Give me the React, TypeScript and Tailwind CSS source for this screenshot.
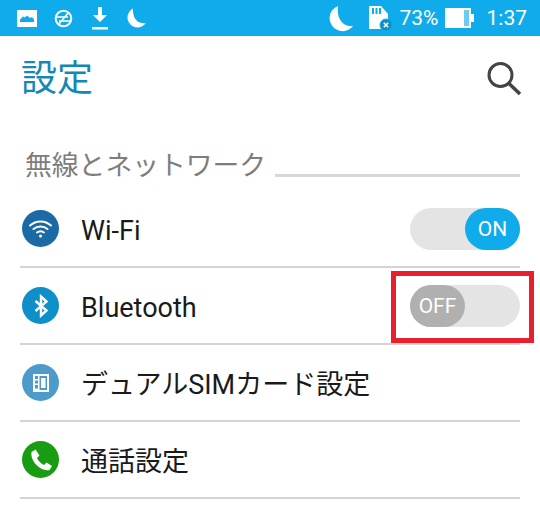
import type { ReactNode } from 'react';

const jp = "font-['Roboto','Noto_Sans_CJK_JP',sans-serif]";

function Toggle({ on }: { on: boolean }) {
  return (
    <div className={`relative flex h-[42px] w-[110px] rounded-full bg-[#e4e4e4] ${on ? 'justify-end' : 'justify-start'}`}>
      <div
        className={`flex h-[42px] w-[55px] items-center justify-center rounded-full text-[21px] text-white ${
          on ? 'bg-[#0fabeb]' : 'bg-[#b0b0b0]'
        }`}
      >
        <span className="pt-[2px]">{on ? 'ON' : 'OFF'}</span>
      </div>
    </div>
  );
}

function Row({ icon, color, label, right }: { icon: ReactNode; color: string; label: string; right?: ReactNode }) {
  return (
    <div className="flex h-[77px] items-center justify-between border-b-2 border-[#d4d4d4]">
      <div className="ml-[2px] flex items-center">
        <div className={`flex h-[37px] w-[37px] items-center justify-center rounded-full ${color}`}>{icon}</div>
        <span className="ml-[22px] pt-[5px] text-[27px] leading-none text-[#1a1a1a]">{label}</span>
      </div>
      {right}
    </div>
  );
}

export default function App() {
  return (
    <div className={`h-[505px] w-[540px] overflow-hidden bg-white ${jp}`}>
      {/* ステータスバー */}
      <div className="flex h-[36px] items-center justify-between bg-[#0fabeb] text-white">
        <div className="flex items-center">
          <svg className="ml-[17px]" width="20" height="17" viewBox="0 0 20 17">
            <path fill="#fff" d="M0 0h20v17H0z" />
            <path fill="#0fabeb" d="M3 12V9.500L6 6.500l2 1 2-2 3 2.500 2-1 2 2.500V12z" />
          </svg>
          <svg className="ml-[17px]" width="19" height="19" viewBox="0 0 19 19">
            <circle cx="9.500" cy="9.500" r="7.800" fill="none" stroke="#fff" strokeWidth="2" />
            <path stroke="#fff" strokeWidth="1.600" d="M3 8h11M5 12h11M14.500 3.500l-10 12" fill="none" />
          </svg>
          <svg className="ml-[18px]" width="18" height="24" viewBox="0 0 18 24">
            <path fill="#fff" d="M7 1h4v8h5l-7 7-7-7h5zM1 21h16v2.500H1z" />
          </svg>
          <svg className="ml-[16px]" width="21" height="21" viewBox="0 0 21 21">
            <path fill="#fff" d="M8 .5a10 10 0 1 0 12.800 14.500C15 16 7.500 13 8 .5z" />
          </svg>
        </div>
        <div className="flex items-center">
          <svg width="27" height="27" viewBox="0 0 27 27">
            <path fill="#fff" d="M11 1a13 13 0 1 0 15 20C19 22 9 17 11 1z" />
          </svg>
          <svg className="ml-[14px]" width="24" height="26" viewBox="0 0 24 26">
            <path fill="#fff" d="M1 1h12l7 8v15H1z" />
            <path fill="#0fabeb" d="M4 3h2v6H4zM7.500 3h2v6h-2zM11 3h2v6h-2z" />
            <circle cx="18" cy="20" r="6" fill="#0d8ec4" stroke="#0fabeb" strokeWidth="1" />
            <path stroke="#fff" strokeWidth="1.600" d="M15.800 17.800l4.400 4.400M20.200 17.800l-4.400 4.400" />
          </svg>
          <span className="ml-[8px] text-[21px] leading-none">73%</span>
          <svg className="ml-[6px]" width="30" height="20" viewBox="0 0 30 20">
            <path fill="#fff" d="M0 0h26v20H0z" />
            <path fill="#6dcaf0" d="M19 2h5v16h-5z" />
            <path fill="#fff" d="M26 6h3v8h-3z" />
          </svg>
          <span className="mr-[13px] ml-[12px] text-[21px] leading-none">1:37</span>
        </div>
      </div>

      {/* タイトル */}
      <div className="flex h-[83px] items-center justify-between pr-[18px] pl-[21px]">
        <span className="pt-[3px] text-[36px] leading-none text-[#1488b4]">設定</span>
        <svg width="36" height="36" viewBox="0 0 36 36" className="mt-[1px]">
          <circle cx="14.500" cy="15" r="11.500" fill="none" stroke="#444" strokeWidth="3" />
          <path stroke="#444" strokeWidth="3.500" d="M23 23.500l11 10.500" />
        </svg>
      </div>

      {/* セクション */}
      <div className="mt-[29px] flex items-end pr-[20px] pl-[25px]">
        <span className="pt-[3px] text-[26.800px] leading-[31px] text-[#7d7d7d]">無線とネットワーク</span>
        <div className="mb-[5px] ml-[9px] h-[3px] flex-1 bg-[#d8d8d8]" />
      </div>

      <div className="mt-[9px] px-[20px]">
        <Row
          label="Wi-Fi"
          color="bg-[#1c6aa5]"
          right={<Toggle on />}
          icon={
            <svg width="25" height="25" viewBox="0 0 25 25" fill="none" stroke="#fff" strokeWidth="2" strokeLinecap="round">
              <path d="M2 9.500c6-5.500 15-5.500 21 0M5.500 13c4-3.500 10-3.500 14 0M9 16.500c2-1.500 5-1.500 7 0" />
              <circle cx="12.500" cy="20" r="1.500" fill="#fff" stroke="none" />
            </svg>
          }
        />
        <div className="relative">
          <Row
            label="Bluetooth"
            color="bg-[#0f8fc8]"
            right={<Toggle on={false} />}
            icon={
              <svg width="22" height="24" viewBox="0 0 22 24" fill="none" stroke="#fff" strokeWidth="2.400">
                <path d="M5.500 7l11 9.500-5.500 5V2.500l5.500 5-11 9.500" />
              </svg>
            }
          />
          <div className="absolute top-[3px] left-[371px] h-[72px] w-[143px] border-[5px] border-[#e8202e]" />
        </div>
        <Row
          label="デュアルSIMカード設定"
          color="bg-[#4c9bcb]"
          icon={
            <svg width="16" height="18" viewBox="0 0 16 18">
              <path fill="#fff" d="M0 0h16v18H0z" />
              <path fill="#4c9bcb" d="M2 2h3v3H2zM2 6.500h3v3H2zM2 11h3v3.500H2zM6.500 2H14v14H6.500z" />
              <path fill="#fff" d="M8 4h4.500v10H8z" />
            </svg>
          }
        />
        <Row
          label="通話設定"
          color="bg-[#189c12]"
          icon={
            <svg width="24" height="24" viewBox="0 0 24 24">
              <path
                fill="#fff"
                d="M6.600 1.500L2.500 4c-.8 5 1.700 9.500 5 13s8 6 13 5l2.500-4-5.500-3.500-2.500 2.500c-2.500-1-6-4.500-7-7l2.500-2.500z"
              />
            </svg>
          }
        />
      </div>
    </div>
  );
}
